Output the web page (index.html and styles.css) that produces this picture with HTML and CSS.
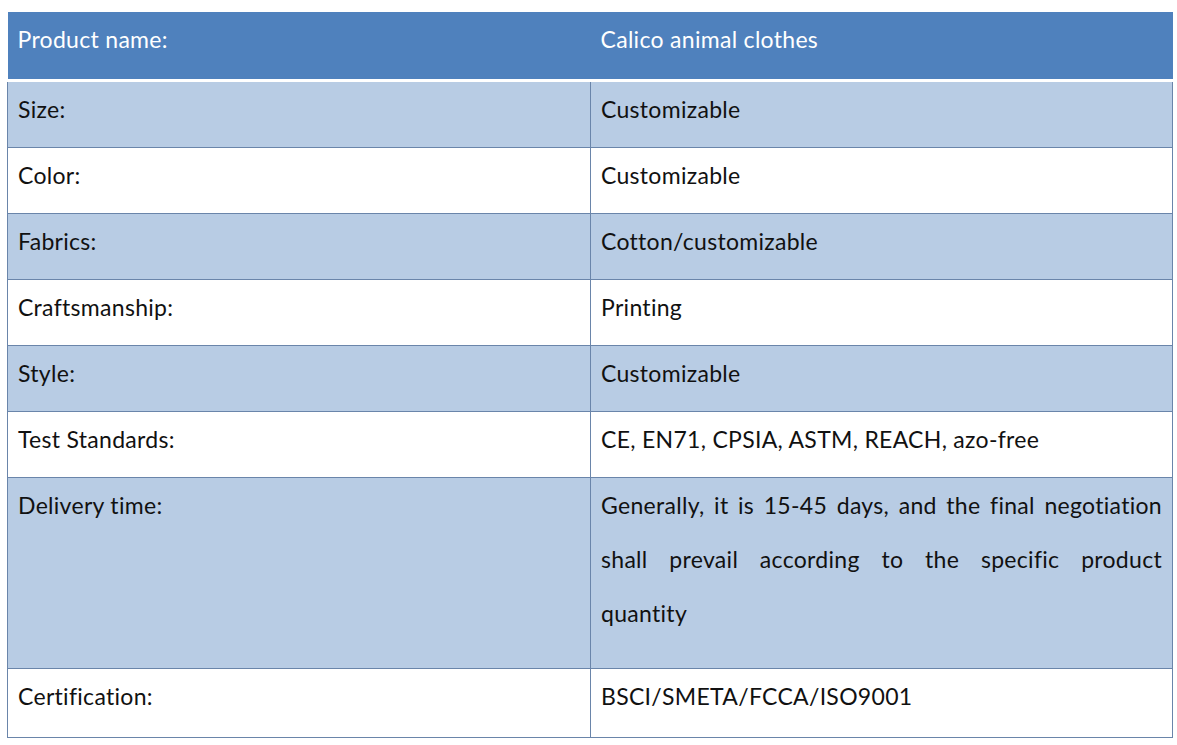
FILE: index.html
```html
<!DOCTYPE html>
<html>
<head>
<meta charset="utf-8">
<link rel="stylesheet" href="styles.css">
</head>
<body>
<table class="spec">
  <thead>
    <tr class="head">
      <th class="c1">Product name:</th>
      <th class="c2">Calico animal clothes</th>
    </tr>
  </thead>
  <tbody>
    <tr class="shade"><td class="c1">Size:</td><td class="c2">Customizable</td></tr>
    <tr><td class="c1">Color:</td><td class="c2">Customizable</td></tr>
    <tr class="shade"><td class="c1">Fabrics:</td><td class="c2">Cotton/customizable</td></tr>
    <tr><td class="c1">Craftsmanship:</td><td class="c2">Printing</td></tr>
    <tr class="shade"><td class="c1">Style:</td><td class="c2">Customizable</td></tr>
    <tr><td class="c1">Test Standards:</td><td class="c2">CE, EN71, CPSIA, ASTM, REACH, azo-free</td></tr>
    <tr class="shade tall">
      <td class="c1">Delivery time:</td>
      <td class="c2">
        <span class="jl">Generally, it is 15-45 days, and the final negotiation</span>
        <span class="jl">shall prevail according to the specific product</span>
        <span class="last">quantity</span>
      </td>
    </tr>
    <tr class="final"><td class="c1">Certification:</td><td class="c2">BSCI/SMETA/FCCA/ISO9001</td></tr>
  </tbody>
</table>
</body>
</html>
```

FILE: styles.css
```css
html, body {
  margin: 0;
  padding: 0;
  background: #ffffff;
}

body {
  padding: 12px 0 0 7px;
  font-family: Lato, "Open Sans", sans-serif;
  color: #111111;
}

.spec {
  width: 1166px;
  border-collapse: collapse;
  table-layout: fixed;
}

.spec .c1 {
  width: 563px;
}

.spec th,
.spec td {
  font-size: 23px;
  font-weight: normal;
  text-align: left;
  vertical-align: top;
  line-height: 54px;
  padding: 0 10px 11px 10px;
  height: 54px;
  letter-spacing: 0.3px;
}

.head th {
  background: #4f81bd;
  color: #ffffff;
  border-bottom: 3px solid #ffffff;
  padding-bottom: 13px;
}

.spec td {
  border: 1px solid #6a85aa;
  border-top: none;
}

.spec tbody tr:first-child td {
  border-top: none;
}

.shade td {
  background: #b8cce4;
}

.tall td {
  padding-bottom: 28px;
}

.jl {
  display: block;
  text-align: justify;
  text-align-last: justify;
}

.last {
  display: block;
}

.final td {
  height: 57px;
}
```
